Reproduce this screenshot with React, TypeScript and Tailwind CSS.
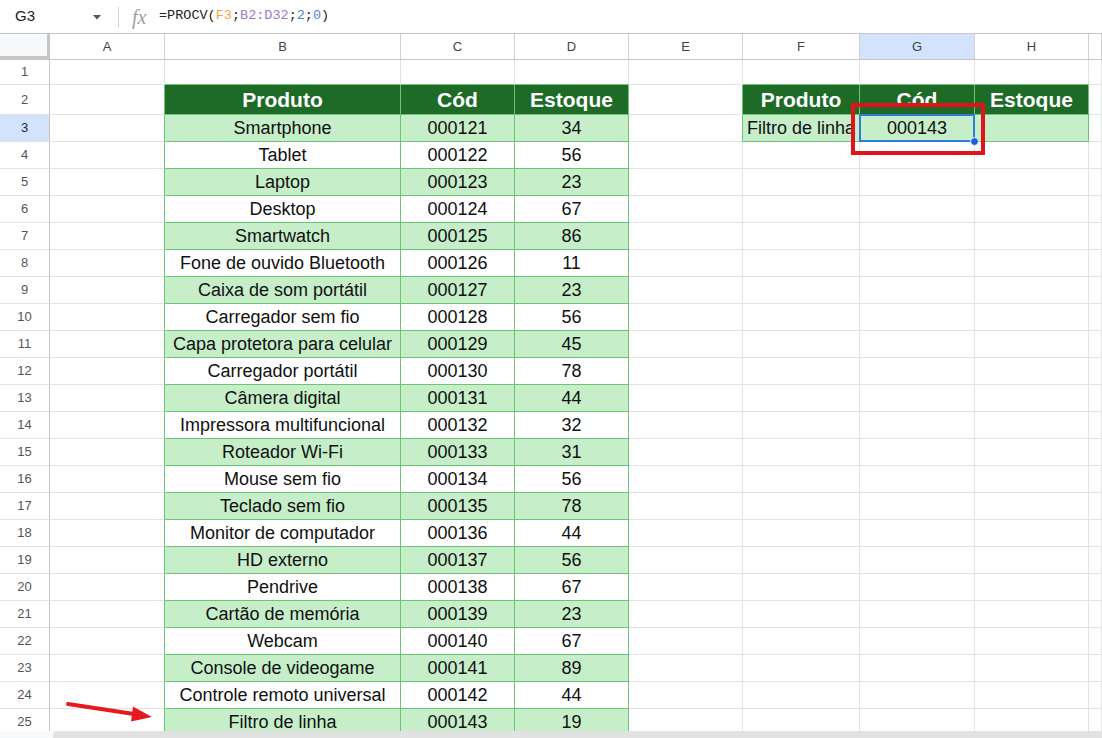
const products: [string, string, number][] = [
  ['Smartphone', '000121', 34],
  ['Tablet', '000122', 56],
  ['Laptop', '000123', 23],
  ['Desktop', '000124', 67],
  ['Smartwatch', '000125', 86],
  ['Fone de ouvido Bluetooth', '000126', 11],
  ['Caixa de som portátil', '000127', 23],
  ['Carregador sem fio', '000128', 56],
  ['Capa protetora para celular', '000129', 45],
  ['Carregador portátil', '000130', 78],
  ['Câmera digital', '000131', 44],
  ['Impressora multifuncional', '000132', 32],
  ['Roteador Wi-Fi', '000133', 31],
  ['Mouse sem fio', '000134', 56],
  ['Teclado sem fio', '000135', 78],
  ['Monitor de computador', '000136', 44],
  ['HD externo', '000137', 56],
  ['Pendrive', '000138', 67],
  ['Cartão de memória', '000139', 23],
  ['Webcam', '000140', 67],
  ['Console de videogame', '000141', 89],
  ['Controle remoto universal', '000142', 44],
  ['Filtro de linha', '000143', 19],
]

const colWidths = ['w-[115px]', 'w-[236px]', 'w-[114px]', 'w-[114px]', 'w-[114px]', 'w-[117px]', 'w-[115px]', 'w-[114px]', 'flex-1']
const letters = ['A', 'B', 'C', 'D', 'E', 'F', 'G', 'H', '']

type CellData = { text?: string; kind: 'plain' | 'head' | 'green' | 'white'; align?: 'left' | 'center' }

// row -> column -> content, rows start at 1
function buildSheet(): CellData[][] {
  const rows: CellData[][] = []
  for (let r = 1; r <= 25; r++) {
    const row: CellData[] = letters.map(() => ({ kind: 'plain' as const }))
    if (r === 2) {
      row[1] = { text: 'Produto', kind: 'head' }
      row[2] = { text: 'Cód', kind: 'head' }
      row[3] = { text: 'Estoque', kind: 'head' }
      row[5] = { text: 'Produto', kind: 'head' }
      row[6] = { text: 'Cód', kind: 'head' }
      row[7] = { text: 'Estoque', kind: 'head' }
    }
    if (r >= 3) {
      const [name, cod, qty] = products[r - 3]
      const kind = r % 2 === 1 ? 'green' : 'white'
      row[1] = { text: name, kind }
      row[2] = { text: cod, kind }
      row[3] = { text: String(qty), kind }
    }
    if (r === 3) {
      row[5] = { text: 'Filtro de linha', kind: 'green', align: 'left' }
      row[6] = { text: '000143', kind: 'green' }
      row[7] = { text: '', kind: 'green' }
    }
    rows.push(row)
  }
  return rows
}

const sheet = buildSheet()

function inTable(r: number, c: number) {
  if (r < 1 || r > 25) return false
  const cell = sheet[r - 1][c]
  return cell !== undefined && cell.kind !== 'plain'
}

function rowHeight(r: number) {
  if (r === 1) return 'h-[25px]'
  if (r === 2) return 'h-[30px]'
  return 'h-[27px]'
}

function Cell({ r, c }: { r: number; c: number }) {
  const cell = sheet[r - 1][c]
  const greenRight = inTable(r, c) || inTable(r, c + 1)
  const greenBottom = inTable(r, c) || inTable(r + 1, c)
  const bg =
    cell.kind === 'head'
      ? 'bg-[#1d6b27] text-white font-bold text-[21px]'
      : cell.kind === 'green'
        ? 'bg-[#c5eec9] text-[#111] text-[18px]'
        : 'bg-white text-[#111] text-[18px]'
  const selected = r === 3 && c === 6
  return (
    <div
      className={`relative flex shrink-0 items-center overflow-visible whitespace-nowrap border-r border-b ${colWidths[c]} ${bg} ${
        greenRight ? 'border-r-[#6cc474]' : 'border-r-[#e2e3e3]'
      } ${greenBottom ? 'border-b-[#6cc474]' : 'border-b-[#e2e3e3]'} ${
        cell.align === 'left' ? 'justify-start pl-[4px]' : 'justify-center'
      } ${selected ? 'z-10' : ''}`}
    >
      {cell.text}
      {selected && (
        <>
          <div className="absolute inset-[-1px] border-2 border-[#2f7bd6]" />
          <div className="absolute right-[-5px] bottom-[-5px] h-[9px] w-[9px] rounded-full border border-white bg-[#1c5fd4]" />
        </>
      )}
    </div>
  )
}

function FormulaBar() {
  return (
    <div className="flex h-[34px] items-center border-b border-[#c7c7c7] bg-white">
      <div className="w-[92px] pl-[15px] text-[15px] text-[#222]">G3</div>
      <svg className="h-[10px] w-[10px] text-[#555]" viewBox="0 0 10 10">
        <path d="M1 3h8L5 7.5z" fill="currentColor" />
      </svg>
      <div className="ml-[16px] h-[20px] w-px bg-[#d0d0d0]" />
      <div className="ml-[13px] w-[24px] font-['Liberation_Serif',serif] text-[20px] italic text-[#9aa0a6]">fx</div>
      <div className="ml-[3px] font-['Liberation_Mono',monospace] text-[13.5px] text-[#222]">
        =PROCV(<span className="text-[#f1a43a]">F3</span>;<span className="text-[#9c7bc5]">B2:D32</span>;
        <span className="text-[#4f86c6]">2</span>;<span className="text-[#4f86c6]">0</span>)
      </div>
    </div>
  )
}

function ColumnHeader() {
  return (
    <div className="flex h-[26px] border-b border-[#c4c7c5] bg-white">
      <div className="w-[50px] shrink-0 border-r-[3px] border-b-[3px] border-[#c4c7c5] bg-[#f8f9fa]" />
      {letters.map((l, i) => (
        <div
          key={i}
          className={`flex shrink-0 items-center justify-center border-r border-[#d0d2d2] text-[13px] text-[#444] ${colWidths[i]} ${
            l === 'G' ? 'bg-[#d3e3fd] text-[#0b2a5e]' : 'bg-white'
          }`}
        >
          {l}
        </div>
      ))}
    </div>
  )
}

function Arrow() {
  return (
    <svg className="absolute left-[60px] top-[695px] h-[32px] w-[100px]" viewBox="0 0 100 32">
      <line x1="8" y1="9" x2="74" y2="19" stroke="#e51a1f" strokeWidth="4" strokeLinecap="round" />
      <polygon points="92,22 73,11.5 71,26.5" fill="#e51a1f" />
    </svg>
  )
}

export default function App() {
  return (
    <div className="relative h-[738px] w-[1102px] overflow-hidden bg-white font-['Liberation_Sans',Arial,sans-serif]">
      <FormulaBar />
      <ColumnHeader />
      {sheet.map((row, ri) => {
        const r = ri + 1
        return (
          <div key={r} className={`flex ${rowHeight(r)}`}>
            <div
              className={`flex w-[50px] shrink-0 items-center justify-center border-r border-b border-r-[#c4c7c5] border-b-[#e2e3e3] text-[13px] ${
                r === 3 ? 'bg-[#d3e3fd] text-[#0b2a5e]' : 'bg-white text-[#555]'
              }`}
            >
              {r}
            </div>
            {row.map((_, c) => (
              <Cell key={c} r={r} c={c} />
            ))}
          </div>
        )
      })}
      <div className="absolute left-[851px] top-[103px] z-20 h-[52px] w-[134px] border-4 border-[#e3131b]" />
      <Arrow />
      <div className="absolute bottom-0 left-0 z-20 flex h-[7px] w-full bg-[#f8f9fa]">
        <div className="ml-[53px] flex-1 rounded-tl-[4px] bg-[#e2e2e2]" />
      </div>
    </div>
  )
}
